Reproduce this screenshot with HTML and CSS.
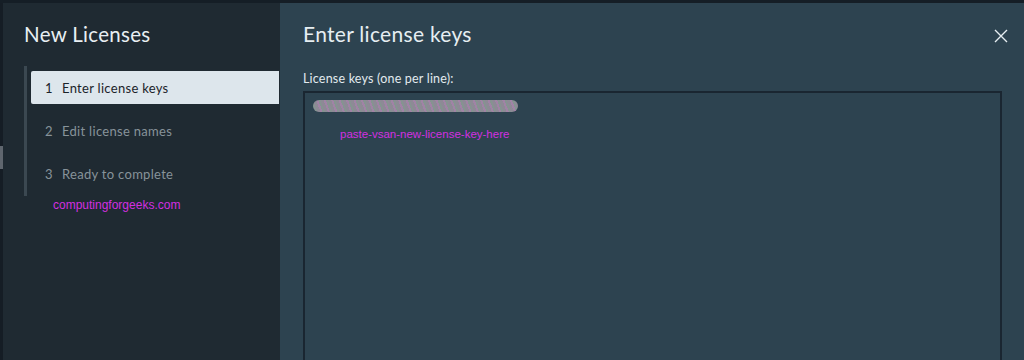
FILE: index.html
```html
<!DOCTYPE html>
<html>
<head>
<meta charset="utf-8">
<link rel="stylesheet" href="styles.css">
</head>
<body>
<div class="topstrip"></div>
<div class="modal">
  <aside class="sidebar">
    <div class="edge-mark"></div>
    <h2 class="side-title">New Licenses</h2>
    <ol class="steps">
      <li class="step active"><span class="num">1</span><span>Enter license keys</span></li>
      <li class="step"><span class="num">2</span><span>Edit license names</span></li>
      <li class="step"><span class="num">3</span><span>Ready to complete</span></li>
    </ol>
    <div class="watermark">computingforgeeks.com</div>
  </aside>
  <main class="content">
    <header class="content-head">
      <h1 class="content-title">Enter license keys</h1>
      <button class="close" aria-label="Close">
        <svg width="14" height="14" viewBox="0 0 14 14"><path d="M1 1L13 13M13 1L1 13" stroke="#e6eef2" stroke-width="1.4" fill="none"/></svg>
      </button>
    </header>
    <label class="field-label">License keys (one per line):</label>
    <div class="keys-box">
      <div class="scribble"></div>
      <div class="paste-hint">paste-vsan-new-license-key-here</div>
    </div>
  </main>
</div>
</body>
</html>
```
FILE: styles.css
```css
html, body {
  margin: 0;
  padding: 0;
  width: 1024px;
  height: 360px;
  overflow: hidden;
  background: #17212a;
  font-family: "Lato", "Noto Sans", sans-serif;
}
.topstrip {
  height: 3px;
  background: #151e26;
}
.modal {
  display: flex;
  height: 357px;
}
.sidebar {
  position: relative;
  width: 280px;
  flex: none;
  box-sizing: border-box;
  background: #1f2a32;
  border-left: 3px solid #151d25;
  padding-left: 21px;
}
.edge-mark {
  position: absolute;
  left: -3px;
  top: 143px;
  width: 3px;
  height: 23px;
  background: #5f666e;
}
.side-title {
  margin: 0;
  padding-top: 19px;
  font-weight: 400;
  font-size: 20.5px;
  line-height: 24px;
  color: #e9eff3;
  letter-spacing: 0.3px;
}
.steps {
  list-style: none;
  margin: 20px 0 0 0;
  padding: 5px 0 6px 4px;
  border-left: 3px solid #3b4851;
  display: flex;
  flex-direction: column;
  gap: 10px;
}
.step {
  display: flex;
  align-items: center;
  height: 33px;
  padding-left: 14px;
  font-size: 13px;
  color: #87939a;
  letter-spacing: 0.3px;
}
.step .num {
  width: 17px;
}
.step.active {
  background: #dde6ec;
  color: #1b2329;
  border-radius: 2px 0 0 2px;
  margin-right: 1px;
}
.watermark {
  margin: 2px 0 0 29px;
  font-family: "Liberation Sans", Arial, sans-serif;
  font-size: 12px;
  color: #d32fe0;
}
.content {
  flex: 1;
  background: #2d4350;
  padding: 0 23px 0 23px;
  display: flex;
  flex-direction: column;
}
.content-head {
  display: flex;
  justify-content: space-between;
  align-items: center;
  padding-top: 19px;
}
.content-title {
  margin: 0;
  font-weight: 400;
  font-size: 21px;
  line-height: 24px;
  color: #e6eef2;
  letter-spacing: 0.3px;
}
.close {
  background: none;
  border: 0;
  padding: 0;
  margin-right: -7px;
  margin-top: 4px;
  width: 14px;
  height: 14px;
  display: flex;
}
.field-label {
  margin-top: 25px;
  font-size: 12.5px;
  line-height: 16px;
  color: #e2eaee;
  letter-spacing: 0.2px;
}
.keys-box {
  margin-top: 4px;
  margin-right: -1px;
  flex: 1;
  border: 2px solid #1a2631;
  border-bottom: 0;
  padding: 7px 0 0 8px;
  box-sizing: border-box;
}
.scribble {
  width: 205px;
  height: 12px;
  border-radius: 6px;
  background:
    repeating-linear-gradient(70deg, rgba(200,120,200,0.35) 0 2px, rgba(120,170,140,0.3) 2px 4px, rgba(150,140,160,0.2) 4px 7px),
    #8b8993;
  filter: blur(0.6px);
}
.paste-hint {
  margin: 16px 0 0 27px;
  font-family: "Liberation Sans", Arial, sans-serif;
  font-size: 11.5px;
  color: #d32fe0;
}
```
